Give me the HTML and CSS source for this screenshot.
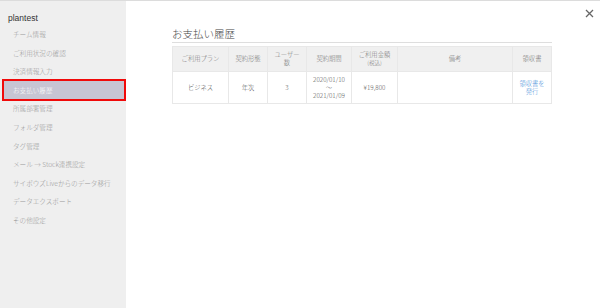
FILE: index.html
```html
<!DOCTYPE html>
<html lang="ja">
<head>
<meta charset="utf-8">
<link rel="stylesheet" href="styles.css">
</head>
<body>
<div class="app">
  <aside class="sidebar">
    <div class="org">plantest</div>
    <nav class="menu">
      <div class="item">チーム情報</div>
      <div class="item">ご利用状況の確認</div>
      <div class="item">決済情報入力</div>
      <div class="item active">お支払い履歴</div>
      <div class="item">所属部署管理</div>
      <div class="item">フォルダ管理</div>
      <div class="item">タグ管理</div>
      <div class="item">メール → Stock連携設定</div>
      <div class="item">サイボウズLiveからのデータ移行</div>
      <div class="item">データエクスポート</div>
      <div class="item">その他設定</div>
    </nav>
  </aside>
  <main class="main">
    <div class="close">
      <svg width="9" height="9" viewBox="0 0 9 9"><path d="M1 1L8 8M8 1L1 8" stroke="#666" stroke-width="1.3"/></svg>
    </div>
    <h1 class="title">お支払い履歴</h1>
    <table class="tbl">
      <colgroup>
        <col class="c1"><col class="c2"><col class="c3"><col class="c4"><col class="c5"><col class="c6"><col class="c7">
      </colgroup>
      <thead>
        <tr>
          <th>ご利用プラン</th>
          <th>契約形態</th>
          <th>ユーザー<br>数</th>
          <th>契約期間</th>
          <th>ご利用金額<br><span class="small">(税込)</span></th>
          <th>備考</th>
          <th>領収書</th>
        </tr>
      </thead>
      <tbody>
        <tr>
          <td>ビジネス</td>
          <td>年次</td>
          <td>3</td>
          <td>2020/01/10<br>～<br>2021/01/09</td>
          <td>¥19,800</td>
          <td></td>
          <td><a class="link">領収書を<br>発行</a></td>
        </tr>
      </tbody>
    </table>
  </main>
</div>
</body>
</html>
```
FILE: styles.css
```css
html, body {
  margin: 0;
  padding: 0;
  background: #fff;
  font-family: "Noto Sans CJK JP", "Noto Sans", sans-serif;
}
.app {
  display: flex;
  width: 600px;
  height: 308px;
  border-top: 1px solid #dcdcdc;
  box-sizing: border-box;
}
.sidebar {
  width: 126px;
  flex: none;
  background: #efefef;
  padding-top: 10px;
  box-sizing: border-box;
}
.org {
  font-family: "Liberation Sans", "Noto Sans CJK JP", sans-serif;
  font-size: 8.5px;
  color: #333;
  padding-left: 8px;
  height: 14px;
  line-height: 14px;
}
.menu {
  display: flex;
  flex-direction: column;
}
.item {
  font-size: 6.6px;
  font-weight: 300;
  color: #999;
  height: 18.6px;
  line-height: 18.6px;
  padding-left: 13px;
  white-space: nowrap;
}
.item.active {
  margin-left: 2px;
  margin-top: -2px;
  margin-bottom: -1.4px;
  padding-left: 9px;
  height: 22px;
  line-height: 18px;
  box-sizing: border-box;
  border: 2px solid #f00a0a;
  background: #c7c5d3;
  color: #fff;
}
.main {
  flex: 1;
  position: relative;
  padding: 25px 49px 0 46px;
}
.close {
  position: absolute;
  top: 8px;
  right: 7px;
  width: 9px;
  height: 9px;
}
.close svg { display: block; }
.title {
  margin: 0;
  font-size: 10.5px;
  font-weight: 300;
  color: #444;
  height: 16px;
  line-height: 16px;
  border-bottom: 1px solid #dedede;
}
.tbl {
  margin-top: 3px;
  width: 379px;
  border-collapse: collapse;
  table-layout: fixed;
  font-size: 6.3px;
  font-weight: 300;
  color: #777;
}
.tbl th, .tbl td {
  border: 1px solid #e8e8e8;
  text-align: center;
  vertical-align: middle;
  padding: 0;
  font-weight: 300;
  line-height: 8px;
}
.tbl th {
  background: #f0f0f0;
  height: 24px;
}
.tbl td {
  height: 31px;
  color: #555;
}
.small { font-size: 5.6px; }
.c1 { width: 56px; }
.c2 { width: 39px; }
.c3 { width: 39px; }
.c4 { width: 45px; }
.c5 { width: 46px; }
.c6 { width: 115px; }
.c7 { width: 39px; }
.link { color: #4a90d9; }
```
